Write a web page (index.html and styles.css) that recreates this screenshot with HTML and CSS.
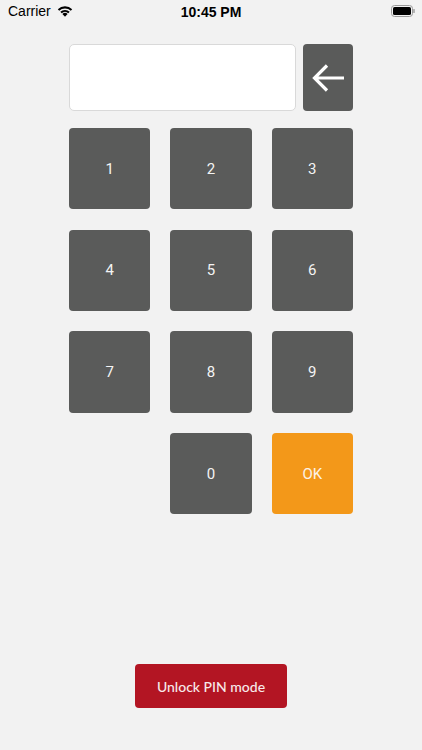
FILE: index.html
```html
<!DOCTYPE html>
<html>
<head>
<meta charset="utf-8">
<link rel="stylesheet" href="styles.css">
</head>
<body>
<div class="status">
  <div class="status-left">
    <span class="carrier">Carrier</span>
    <svg class="wifi" width="16" height="12" viewBox="0 0 16 12">
      <path d="M8 11.8 L5.4 9 A3.8 3.8 0 0 1 10.6 9 Z" fill="#000"/>
      <path d="M3.3 6.8 A6.8 6.8 0 0 1 12.7 6.8 L11.3 8.3 A4.8 4.8 0 0 0 4.7 8.3 Z" fill="#000"/>
      <path d="M0.8 4.3 A10.2 10.2 0 0 1 15.2 4.3 L13.8 5.8 A8.2 8.2 0 0 0 2.2 5.8 Z" fill="#000"/>
    </svg>
  </div>
  <div class="time">10:45 PM</div>
  <div class="status-right">
    <svg width="24" height="12" viewBox="0 0 24 12">
      <rect x="0.5" y="0.5" width="21" height="11" rx="3" fill="none" stroke="#9a9a9a" stroke-width="1"/>
      <rect x="2" y="2" width="18" height="8" rx="1.6" fill="#000"/>
      <rect x="22.3" y="4" width="1.4" height="4" rx="0.6" fill="#9a9a9a"/>
    </svg>
  </div>
</div>

<main class="pad">
  <div class="entry-row">
    <div class="pin-input"></div>
    <button class="back-btn" aria-label="Back">
      <svg width="34" height="30" viewBox="0 0 34 30">
        <path d="M33 15 H4 M16 2.5 L3.5 15 L16 27.5" fill="none" stroke="#fff" stroke-width="3.2" stroke-linecap="butt" stroke-linejoin="miter"/>
      </svg>
    </button>
  </div>
  <div class="keys">
    <button class="key">1</button>
    <button class="key">2</button>
    <button class="key">3</button>
    <button class="key">4</button>
    <button class="key">5</button>
    <button class="key">6</button>
    <button class="key">7</button>
    <button class="key">8</button>
    <button class="key">9</button>
    <div class="key-empty"></div>
    <button class="key">0</button>
    <button class="key key-ok">OK</button>
  </div>
</main>

<div class="footer">
  <button class="unlock">Unlock PIN mode</button>
</div>
</body>
</html>
```

FILE: styles.css
```css
html, body {
  margin: 0;
  padding: 0;
  background: #f2f2f2;
  height: 750px;
}
body {
  font-family: Roboto, "Liberation Sans", sans-serif;
}
.status {
  height: 22px;
  display: flex;
  align-items: center;
  justify-content: space-between;
  padding: 0 7px 0 8px;
  position: relative;
  font-family: "Liberation Sans", Arial, sans-serif;
  color: #000;
}
.status-left {
  display: flex;
  align-items: center;
  gap: 6px;
  font-size: 14px;
}
.wifi {
  margin-top: -1px;
}
.time {
  position: absolute;
  left: 0;
  right: 0;
  text-align: center;
  font-size: 14px;
  font-weight: bold;
  top: 4px;
  pointer-events: none;
}
.status-right {
  display: flex;
  align-items: center;
}
.pad {
  width: 284px;
  margin: 22px auto 0;
}
.entry-row {
  display: flex;
  gap: 7px;
  height: 67px;
}
.pin-input {
  flex: 1;
  background: #fff;
  border: 1px solid #d9d9d9;
  border-radius: 5px;
  box-sizing: border-box;
}
.back-btn {
  width: 50px;
  border: none;
  padding: 0;
  border-radius: 4px;
  background: #5a5b5a;
  display: flex;
  align-items: center;
  justify-content: center;
}
.keys {
  margin-top: 17px;
  display: grid;
  grid-template-columns: repeat(3, 1fr);
  column-gap: 20px;
  row-gap: 20.3px;
}
.key {
  height: 81.4px;
  border: none;
  border-radius: 4px;
  background: #5a5b5a;
  color: #f4f4f4;
  font-family: Roboto, "Liberation Sans", sans-serif;
  font-size: 15px;
  font-weight: 400;
  padding: 0;
}
.key-ok {
  background: #f39819;
  color: #fdf3e6;
}
.footer {
  display: flex;
  justify-content: center;
  margin-top: 150px;
}
.unlock {
  width: 152px;
  height: 44px;
  border: none;
  border-radius: 4px;
  background: #b31523;
  color: #f7e9ea;
  font-family: Lato, "Open Sans", sans-serif;
  font-size: 14px;
  font-weight: 500;
  padding: 0;
}
```
